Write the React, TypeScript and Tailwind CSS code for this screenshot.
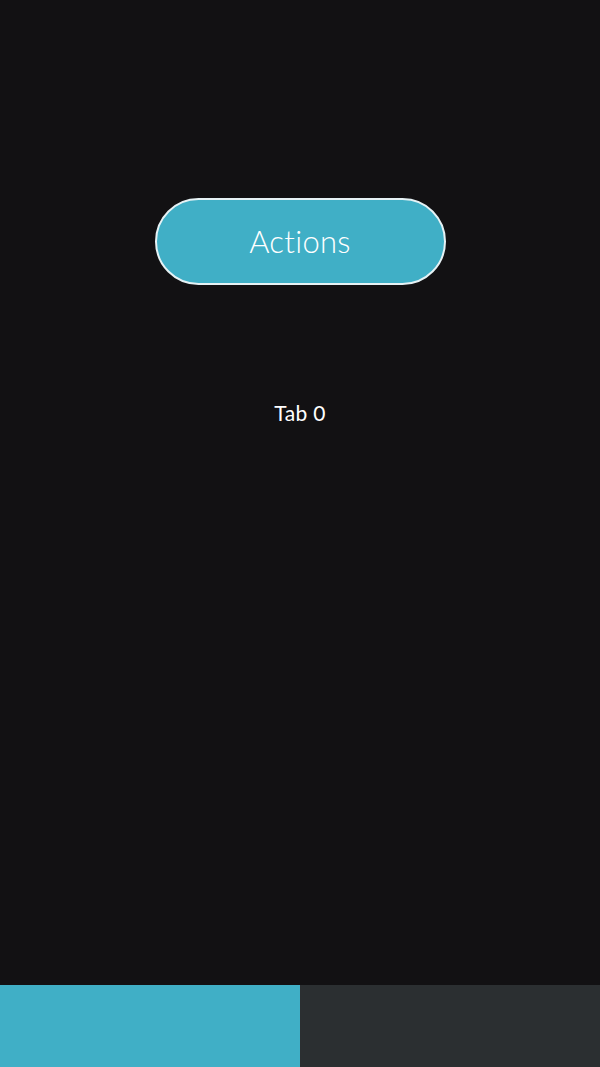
export default function App() {
  return (
    <div className="flex h-[1067px] w-full flex-col bg-[#121113] font-['Lato',sans-serif] text-white">
      {/* content */}
      <div className="flex flex-1 flex-col items-center pt-[198px]">
        <button className="flex h-[87px] w-[291px] items-center justify-center rounded-full border-2 border-[#e6f2f5] bg-[#40afc6] text-[31px] font-light tracking-[0.3px] text-white">
          Actions
        </button>
        <div className="mt-[112px] text-[21px] font-normal tracking-[0.3px]">Tab 0</div>
      </div>

      {/* bottom tabs */}
      <div className="grid h-[82px] grid-cols-2">
        <div className="bg-[#40afc6]" />
        <div className="bg-[#2b2f31]" />
      </div>
    </div>
  );
}
